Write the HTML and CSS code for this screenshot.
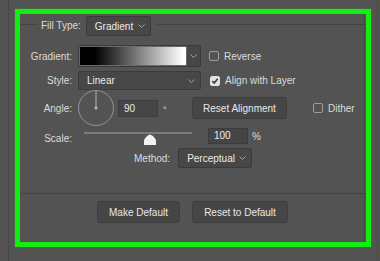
FILE: index.html
```html
<!DOCTYPE html>
<html lang="en">
<head>
  <meta charset="UTF-8">
  <title>Gradient Fill</title>
  <link rel="stylesheet" href="styles.css">
</head>
<body>
  <div class="screen">
    <div class="hl">

      <!-- FILL TYPE LEGEND -->
      <div class="head">
        <span class="rule short"></span>
        <span class="lbl">Fill Type:</span>
        <div class="select sel-fill">
          <span>Gradient</span>
          <svg class="chev" width="7" height="4" viewBox="0 0 7 4"><polyline points="0.5,0.5 3.5,3.5 6.5,0.5"/></svg>
        </div>
        <span class="rule long"></span>
      </div>

      <!-- OPTIONS -->
      <div class="group">
        <div class="row row-grad">
          <span class="label">Gradient:</span>
          <div class="grad-pick">
            <div class="swatch"></div>
            <div class="arrow">
              <svg class="chev" width="7" height="4" viewBox="0 0 7 4"><polyline points="0.5,0.5 3.5,3.5 6.5,0.5"/></svg>
            </div>
          </div>
          <div class="check c-rev"><span class="box"></span>Reverse</div>
        </div>

        <div class="row row-style">
          <span class="label">Style:</span>
          <div class="select sel-style">
            <span>Linear</span>
            <svg class="chev" width="7" height="4" viewBox="0 0 7 4"><polyline points="0.5,0.5 3.5,3.5 6.5,0.5"/></svg>
          </div>
          <div class="check c-align">
            <span class="box on">
              <svg width="8" height="8" viewBox="0 0 8 8"><polyline points="1.3,4.2 3.2,6 6.7,1.8"/></svg>
            </span>Align with Layer
          </div>
        </div>

        <div class="row row-angle">
          <span class="label">Angle:</span>
          <svg class="dial" width="36" height="36" viewBox="0 0 36 36">
            <circle cx="18" cy="18" r="17.5"/>
            <line x1="18" y1="1" x2="18" y2="18"/>
            <circle class="dot" cx="18" cy="18" r="1.6"/>
          </svg>
          <div class="field f-angle">90</div>
          <span class="deg">°</span>
          <button class="btn b-align">Reset Alignment</button>
          <div class="check c-dither"><span class="box"></span>Dither</div>
        </div>

        <div class="row row-scale">
          <span class="label">Scale:</span>
          <div class="slider">
            <div class="track"></div>
            <svg class="thumb" width="12" height="11" viewBox="0 0 12 11"><path d="M6 0.5 C7.5 0.5 12 4.5 12 6.5 L12 11 L0 11 L0 6.5 C0 4.5 4.5 0.5 6 0.5 Z"/></svg>
          </div>
          <div class="field f-scale">100</div>
          <span class="pct">%</span>
        </div>

        <div class="row row-method">
          <span class="lbl-method">Method:</span>
          <div class="select sel-method">
            <span>Perceptual</span>
            <svg class="chev" width="7" height="4" viewBox="0 0 7 4"><polyline points="0.5,0.5 3.5,3.5 6.5,0.5"/></svg>
          </div>
        </div>
      </div>

      <!-- ACTIONS -->
      <div class="actions">
        <button class="btn b-make">Make Default</button>
        <button class="btn b-reset">Reset to Default</button>
      </div>

    </div>
  </div>
</body>
</html>
```

FILE: styles.css
```css
/* ------------- RESET & BASE ------------- */
* { margin: 0; padding: 0; box-sizing: border-box; }
body {
  background: #535353;
  font-family: 'Liberation Sans', Arial, sans-serif;
  font-size: 10px;
  color: #dcdcdc;
  overflow: hidden;
}

.screen {
  width: 370px; height: 261px;
  margin-left: 8px;
  border-left: 1px solid #474747;
  border-right: 1px solid #4b4b4b;
  padding: 9px 0 0 6px;
}

/* ------------- GREEN HIGHLIGHT ------------- */
.hl {
  width: 356px; height: 238px;
  border: 5px solid #14ec14;
  box-shadow: inset -1px 0 0 #535353, inset -2px 0 0 #474747, 0 0 1px #0c0;
}

/* ------------- LEGEND ------------- */
.head { display: flex; height: 22px; }
.rule { height: 1px; background: #444; margin-top: 10px; }
.rule.short { width: 18px; }
.rule.long { flex: 1; margin-left: 6px; }
.head .lbl { margin: 2px 0 0 3px; line-height: 20px; }

/* ------------- CONTROLS ------------- */
.select {
  display: flex; align-items: center; justify-content: space-between;
  height: 20px; padding: 0 5px 0 8px;
  background: #474747; border: 1px solid #3b3b3b; border-radius: 2px;
  color: #ececec;
}
.chev { fill: none; stroke: #a5a5a5; stroke-width: 1; }
.sel-fill { width: 65px; margin: 2px 0 0 5px; }
.sel-style { width: 123px; height: 19px; }
.sel-method { width: 74px; }

.group { border-bottom: 1px solid #444; padding-bottom: 25px; }
.row { display: flex; align-items: center; }
.label { width: 52px; text-align: right; margin-right: 6px; }

.row-grad { height: 22px; margin-top: 9px; }
.grad-pick {
  display: flex; width: 123px; height: 22px;
  background: #474747; border: 1px solid #3a3a3a; border-radius: 2px;
}
.swatch {
  width: 108px;
  background: linear-gradient(90deg, #000 14%, #fff 97%);
  border: 1px solid #6a6a6a; border-radius: 1px;
}
.arrow { flex: 1; display: flex; align-items: center; justify-content: center; }

.check { display: flex; align-items: center; }
.box {
  width: 10px; height: 10px; margin-right: 5px;
  border: 1px solid #9c9c9c; border-radius: 2px;
  display: flex; align-items: center; justify-content: center;
}
.box.on { background: #e2e2e2; border-color: #e2e2e2; }
.box.on polyline { fill: none; stroke: #3a3a3a; stroke-width: 1.6; }
.c-rev { margin-left: 8px; }
.c-align { margin-left: 9px; }
.c-dither { margin-left: 26px; }

.row-style { height: 19px; margin-top: 4px; }

.row-angle { height: 36px; }
.dial circle { fill: none; stroke: #959595; stroke-width: 1; }
.dial line { stroke: #b5b5b5; stroke-width: 1; }
.dial .dot { fill: #b8b8b8; stroke: none; }

.field {
  width: 40px; height: 17px; padding-left: 5px;
  background: #454545; border: 1px solid #3c3c3c;
  line-height: 15px; color: #ececec;
}
.f-angle { margin-left: 4px; }
.deg { width: 34px; padding: 3px 0 0 5px; font-size: 9px; }

.btn {
  height: 22px;
  background: #464646; border: 1px solid #3e3e3e; border-radius: 3px;
  font: inherit; color: #e8e8e8;
}
.b-align { width: 95px; }

.row-scale { height: 16px; margin-top: 2px; }
.row-scale .label { padding-top: 4px; }
.slider { position: relative; width: 108px; height: 16px; margin-left: 6px; }
.track { height: 2px; margin-top: 4px; background: #7a7a7a; }
.thumb { position: absolute; left: 60px; top: 6px; fill: #f2f2f2; }
.f-scale { height: 16px; line-height: 14px; margin-left: 16px; }
.pct { margin-left: 4px; }

.row-method { height: 20px; margin-top: 4px; }
.lbl-method { margin: 0 8px 0 114px; }

/* ------------- ACTIONS ------------- */
.actions {
  display: flex; justify-content: center; gap: 12px;
  margin-top: 7px; padding-right: 1px;
}
.b-make { width: 83px; }
.b-reset { width: 96px; }
```
